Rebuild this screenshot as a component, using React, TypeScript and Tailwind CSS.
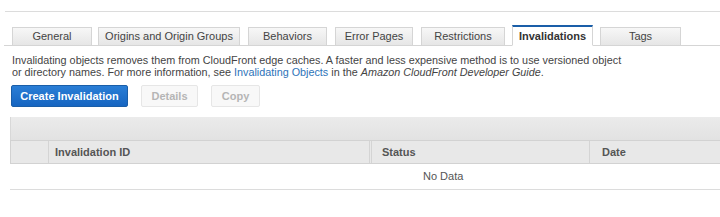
import React from "react";

const tabs = [
  { label: "General", w: 80, ml: 0 },
  { label: "Origins and Origin Groups", w: 142, ml: 6 },
  { label: "Behaviors", w: 79, ml: 8 },
  { label: "Error Pages", w: 78, ml: 8 },
  { label: "Restrictions", w: 84, ml: 8 },
  { label: "Invalidations", w: 81, ml: 7, active: true },
  { label: "Tags", w: 81, ml: 7 },
];

export default function App() {
  return (
    <div
      className="w-[720px] h-[217px] bg-white text-[#333] overflow-hidden"
      style={{ fontFamily: '"Liberation Sans", Arial, sans-serif' }}
    >
      <div className="pt-[11px] pl-[5px]">
        <div className="h-px bg-[#dcdcdc]" />
      </div>
      <div className="mt-[13px] pl-[4px]">
        <div className="flex items-end pl-[8px] border-b border-[#d5d5d5] h-[21px]">
          {tabs.map((t) =>
            t.active ? (
              <div
                key={t.label}
                style={{ width: t.w, marginLeft: t.ml }}
                className="h-[21px] -mb-px flex items-center justify-center bg-white border border-[#d5d5d5] border-b-white border-t-2 border-t-[#1a5ea8] text-[11px] font-bold text-[#333]"
              >
                {t.label}
              </div>
            ) : (
              <div
                key={t.label}
                style={{ width: t.w, marginLeft: t.ml }}
                className="h-[18px] flex items-center justify-center bg-gradient-to-b from-[#f7f7f7] to-[#e6e6e6] border border-[#d5d5d5] border-b-0 text-[11px] text-[#444]"
              >
                {t.label}
              </div>
            )
          )}
        </div>
      </div>
      <div className="pl-[12px] pt-[8px] text-[10.8px] leading-[12px] text-[#444]">
        <div>
          Invalidating objects removes them from CloudFront edge caches. A faster and less expensive method is to use versioned object
        </div>
        <div>
          or directory names. For more information, see{" "}
          <span className="text-[#2d73b9]">Invalidating Objects</span> in the{" "}
          <i>Amazon CloudFront Developer Guide</i>.
        </div>
      </div>
      <div className="flex items-center pl-[11px] pt-[7px] gap-[13px]">
        <div className="w-[117px] h-[22px] rounded-[2px] bg-gradient-to-b from-[#2a7ed6] to-[#1665c1] border border-[#1a5ea8] text-white text-[11px] font-bold flex items-center justify-center">
          Create Invalidation
        </div>
        <div className="w-[57px] h-[22px] rounded-[2px] bg-[#f8f8f8] border border-[#e6e6e6] text-[#b5b5b5] text-[11px] font-bold flex items-center justify-center">
          Details
        </div>
        <div className="w-[49px] h-[22px] rounded-[2px] bg-[#f8f8f8] border border-[#e6e6e6] text-[#b5b5b5] text-[11px] font-bold flex items-center justify-center">
          Copy
        </div>
      </div>
      <div className="ml-[10px] mt-[10px]">
        <div className="h-[23px] bg-gradient-to-b from-[#ebebeb] to-[#e2e2e2] border-l border-[#d8d8d8]" />
        <div className="flex h-[24px] bg-[#e8e8e8] border-t border-b border-l border-[#d2d2d2] text-[11px] font-bold text-[#555]">
          <div className="w-[38px] border-r border-[#d4d4d4]" />
          <div className="w-[321px] pl-[6px] flex items-center border-r border-[#d4d4d4]">Invalidation ID</div>
          <div className="w-[219px] pl-[10px] flex items-center border-l border-r border-[#d4d4d4] ml-[1px]">Status</div>
          <div className="flex-1 pl-[12px] flex items-center">Date</div>
        </div>
        <div className="h-[26px] flex items-center border-b border-[#dcdcdc] text-[11px] text-[#555]">
          <div className="pl-[413px]">No Data</div>
        </div>
      </div>
    </div>
  );
}
